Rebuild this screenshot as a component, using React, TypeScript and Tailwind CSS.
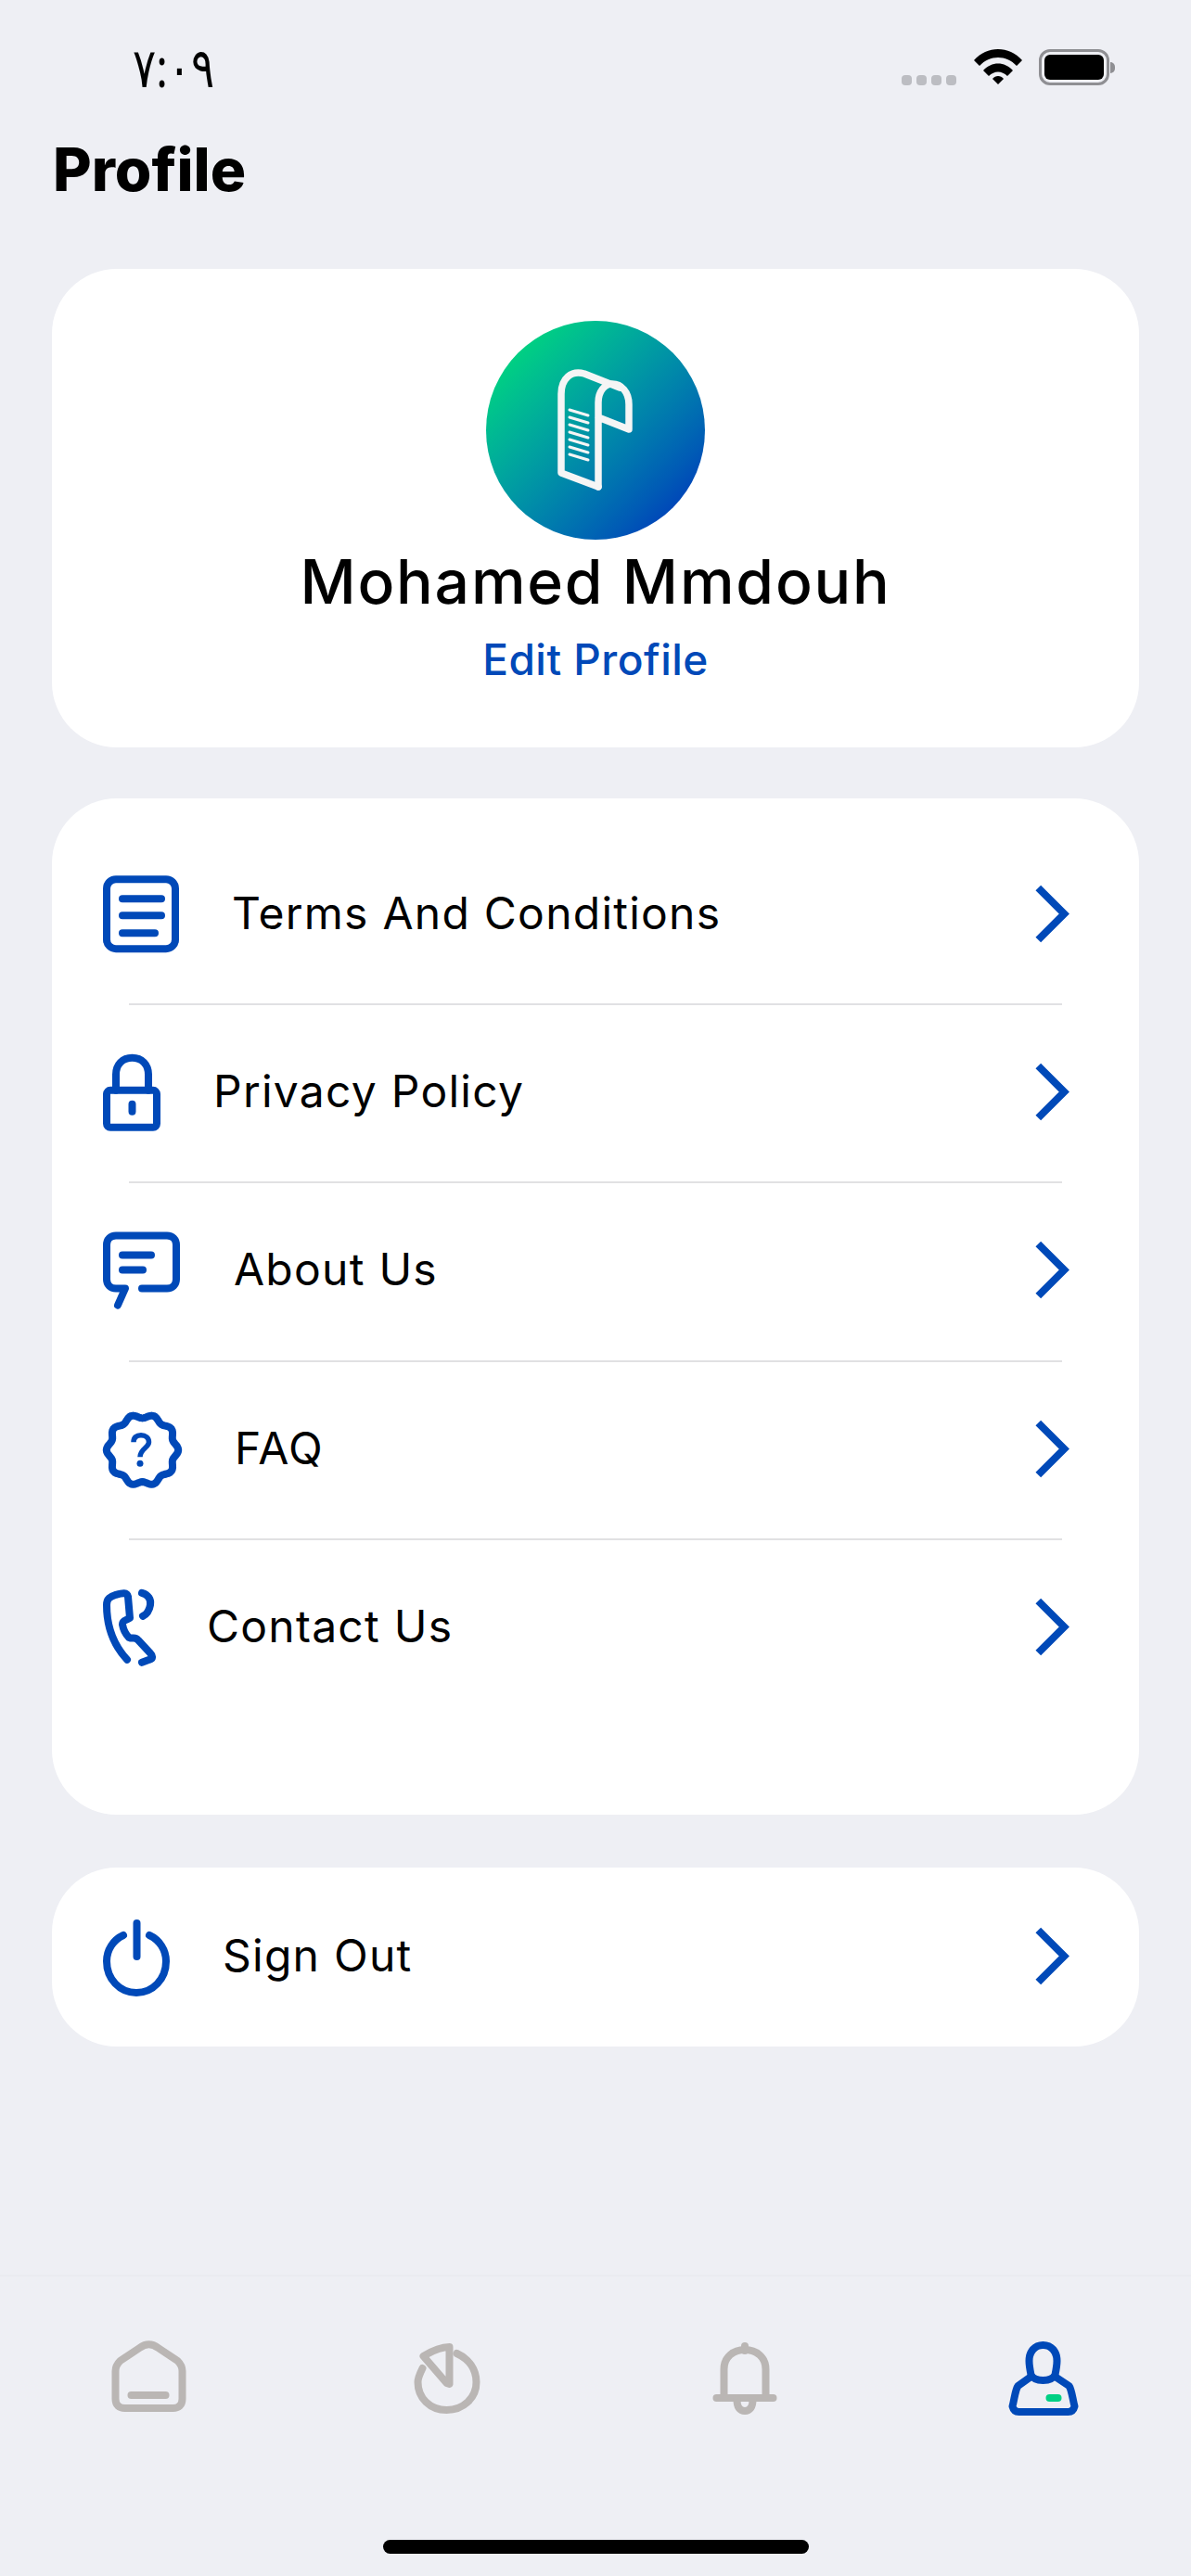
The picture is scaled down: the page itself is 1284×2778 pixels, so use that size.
const BLUE = "#0049b8";
const GREY = "#bab6b4";

const Chevron = () => (
  <svg className="w-[44px] h-[70px] shrink-0" viewBox="0 0 44 70" fill="none">
    <path d="M7.300 5.500L35.300 33.500L7.300 61.500" stroke={BLUE} strokeWidth="8" />
  </svg>
);

// icons are drawn in a 100x100 box, 5px left of the 111px content edge
const DocIcon = () => (
  <svg className="w-[100px] h-[100px] shrink-0" viewBox="106 936.8 100 100" fill="none" stroke={BLUE} strokeWidth="8" strokeLinecap="round">
    <rect x="115" y="948" width="74" height="75" rx="10" />
    <path d="M132 969H174M132 987H174M132 1006H167" />
  </svg>
);

const LockIcon = () => (
  <svg className="w-[100px] h-[100px] shrink-0" viewBox="106 1129.2 100 100" fill="none" stroke={BLUE} strokeWidth="8" strokeLinecap="round" strokeLinejoin="round">
    <rect x="115" y="1176" width="54" height="40" rx="4" />
    <path d="M125 1176V1159C125 1148 132 1141 142.500 1141C153 1141 160 1148 160 1159V1176" />
    <path d="M142.500 1191V1199" />
  </svg>
);

const ChatIcon = () => (
  <svg className="w-[100px] h-[100px] shrink-0" viewBox="106 1321.5 100 100" fill="none" stroke={BLUE} strokeWidth="8" strokeLinecap="round" strokeLinejoin="round">
    <path d="M153 1390H180C186 1390 190 1386 190 1380V1343C190 1337 186 1333 180 1333H125C119 1333 115 1337 115 1343V1380C115 1386 119 1390 125 1390H135L127 1408" />
    <path d="M132 1354H163M132 1370H154" />
  </svg>
);

// scalloped badge: 10 lobes round the centre
const badgePath = Array.from({ length: 120 }, (_, i) => {
  const a = (i / 120) * Math.PI * 2;
  const r = 36.5 + 2.2 * Math.cos(10 * a);
  return `${i === 0 ? "M" : "L"}${(153.5 + r * Math.cos(a)).toFixed(2)} ${(1563.5 + r * Math.sin(a)).toFixed(2)}`;
}).join("") + "Z";

const FaqIcon = () => (
  <svg className="w-[100px] h-[100px] shrink-0" viewBox="106 1513.8 100 100" fill="none" stroke={BLUE} strokeWidth="8" strokeLinejoin="round">
    <path d={badgePath} />
    <path d="M144 1555C144 1550 147 1547.500 152 1547.500C157 1547.500 160.500 1550.500 160.500 1555C160.500 1561 151 1562 151 1571" strokeWidth="5.500" />
    <circle cx="151" cy="1578" r="3.500" fill={BLUE} stroke="none" />
  </svg>
);

const PhoneIcon = () => (
  <svg className="w-[100px] h-[100px] shrink-0" viewBox="106 1706.2 100 100" fill="none" stroke={BLUE} strokeWidth="8" strokeLinecap="round" strokeLinejoin="round">
    <path d="M137 1790C124 1776 115 1757 115 1731C115 1724 119 1722 125 1720C132 1718 137 1717 138 1722L140 1745C136 1748 132 1747 132 1752C133 1758 136 1763 139 1766C143 1768 146 1765 149 1769L162 1783C165 1786 165 1789 161 1790L153 1793" />
    <path d="M153 1718C160 1720 163 1725 162 1731C161 1737 158 1741 154 1743" />
  </svg>
);

const PowerIcon = () => (
  <svg className="w-[100px] h-[100px] shrink-0" viewBox="106 2061 100 100" fill="none" stroke={BLUE} strokeWidth="8" strokeLinecap="round">
    <path d="M133 2087C122 2092 115 2103 115 2115C115 2134 129 2149 147 2149C165 2149 179 2134 179 2115C179 2103 172 2092 161 2087" />
    <path d="M147.500 2074V2110" />
  </svg>
);

const rows = [
  { label: "Terms And Conditions", icon: <DocIcon />, labelClass: "ml-[44px]" },
  { label: "Privacy Policy", icon: <LockIcon />, labelClass: "ml-[24px]" },
  { label: "About Us", icon: <ChatIcon />, labelClass: "ml-[46px]" },
  { label: "FAQ", icon: <FaqIcon />, labelClass: "ml-[47px]" },
  { label: "Contact Us", icon: <PhoneIcon />, labelClass: "ml-[17px]" },
];

const HomeTab = () => (
  <svg className="w-[100px] h-[100px]" viewBox="110.500 2515 100 100" fill="none" stroke={GREY} strokeWidth="8" strokeLinecap="round" strokeLinejoin="round">
    <path d="M124 2557C124 2552 126 2549 129 2546L150 2532C157 2527 163 2527 170 2532L191 2546C194 2549 196 2552 196 2557V2587C196 2594 192 2597 186 2597H134C128 2597 124 2594 124 2587Z" />
    <path d="M141 2583H178" />
  </svg>
);

const PieTab = () => (
  <svg className="w-[100px] h-[100px]" viewBox="431.500 2515 100 100" fill="none" stroke={GREY} strokeWidth="8" strokeLinecap="round" strokeLinejoin="round">
    <path d="M455 2554C452 2560 450 2565 450 2569C450 2586 463 2599 481 2599C499 2599 513 2586 513 2569C513 2555 505 2544 492 2538" />
    <path d="M484 2531C474 2531 464 2536 456 2541L481 2570L484 2571Z" />
  </svg>
);

const BellTab = () => (
  <svg className="w-[100px] h-[100px]" viewBox="752.500 2515 100 100" fill="none" stroke={GREY} strokeWidth="8" strokeLinecap="round" strokeLinejoin="round">
    <path d="M772 2586H833" />
    <path d="M780 2586V2555C780 2542 790 2534 802.500 2534C815 2534 825 2542 825 2555V2586" />
    <path d="M802.500 2530V2535" />
    <path d="M794 2588C794 2596 797 2600 802.500 2600C808 2600 811 2596 811 2588" />
  </svg>
);

const UserTab = () => (
  <svg className="w-[100px] h-[100px]" viewBox="1073.500 2515 100 100" fill="none" strokeLinecap="round" strokeLinejoin="round">
    <path d="M1124 2529C1133 2529 1139 2536 1139 2546C1139 2551 1138 2556 1137 2561C1135 2565 1130 2567 1124 2567C1118 2567 1113 2565 1111 2561C1110 2556 1109 2551 1109 2546C1109 2536 1115 2529 1124 2529Z" stroke={BLUE} strokeWidth="8" />
    <path d="M1111 2563L1097 2573C1094 2577 1093 2588 1091 2595C1092 2599 1094 2601 1098 2601H1151C1155 2601 1157 2599 1158 2595C1156 2588 1155 2577 1152 2573L1137 2563" stroke={BLUE} strokeWidth="8" />
    <path d="M1131 2586H1140" stroke="#00d084" strokeWidth="8" />
  </svg>
);

const LogoMark = () => (
  <svg className="w-[236px] h-[236px]" viewBox="524 346 236 236" fill="none" stroke="#f5f5f5" strokeWidth="7.500" strokeLinecap="round" strokeLinejoin="round">
    <path d="M645 525V434C645 422 652 414 660 414C670 414 678 423 678 436V463L645 450" />
    <path d="M645 525L605 510V425C605 408 616 399 630 403L668 418" />
    <path d="M614 442L634 448M614 450L634 456M614 458L634 464M614 466L634 472M614 474L634 480M614 482L634 488M614 490L634 496" strokeWidth="3" />
  </svg>
);

const StatusIcons = () => (
  <div className="flex items-end">
    <div className="flex gap-[5px]">
      <div className="w-[11px] h-[11px] rounded-[4px] bg-[#bcbdc2]" />
      <div className="w-[11px] h-[11px] rounded-[4px] bg-[#bcbdc2]" />
      <div className="w-[11px] h-[11px] rounded-[4px] bg-[#bcbdc2]" />
      <div className="w-[11px] h-[11px] rounded-[4px] bg-[#bcbdc2]" />
    </div>
    <svg className="ml-[19px] mb-[1px] w-[52px] h-[38px]" viewBox="0 0 52 38">
      <path d="M0 12C14 -4 38 -4 52 12L46 18C35 6 17 6 6 18Z" fill="#000" />
      <path d="M10 23C19 13 33 13 42 23L36 29C30 23 22 23 16 29Z" fill="#000" />
      <path d="M20 32C23 28 29 28 32 32L26 38Z" fill="#000" />
    </svg>
    <div className="ml-[18px] flex items-center">
      <div className="w-[76px] h-[39px] rounded-[12px] border-[3px] border-[#8f8f93] p-[3px]">
        <div className="w-full h-full rounded-[6px] bg-black" />
      </div>
      <div className="ml-[1px] w-[5px] h-[12px] rounded-r-full bg-[#8f8f93]" />
    </div>
  </div>
);

export default function App() {
  return (
    <div className="w-[1284px] h-[2778px] bg-[#eeeff4] flex flex-col font-['Inter',sans-serif] text-black overflow-hidden">
      {/* status bar */}
      <div className="h-[92px] pt-[53px] pl-[143px] pr-[82px] flex items-end justify-between">
        <span className="inline-block text-[47px] leading-[39px] scale-y-[1.25] origin-center font-['Noto_Sans','DejaVu_Sans',sans-serif]">٧:٠٩</span>
        <StatusIcons />
      </div>

      <h1 className="mt-[55px] ml-[57px] text-[64px] leading-[72px] font-extrabold">Profile</h1>

      {/* user card */}
      <div className="mt-[71px] mx-[56px] h-[516px] rounded-[70px] bg-white flex flex-col items-center pt-[56px]">
        <div className="w-[236px] h-[236px] rounded-full bg-linear-to-br from-[#00cf83] from-[15%] to-[#0049b8] to-[85%]">
          <LogoMark />
        </div>
        <div className="mt-[8px] text-[66px] leading-[74px] tracking-[1.800px] font-medium">Mohamed Mmdouh</div>
        <div className="mt-[19px] text-[46px] leading-[56px] tracking-[0.500px] font-medium text-[#0049b8]">Edit Profile</div>
      </div>

      {/* menu card */}
      <div className="mt-[55px] mx-[56px] h-[1096px] rounded-[70px] bg-white pt-[30.670px] flex flex-col">
        {rows.map((row, i) => (
          <div key={row.label}>
            <div className="h-[190.330px] pl-[50px] pr-[72px] flex items-center">
              {row.icon}
              <span className={`-mt-[4px] text-[48px] leading-[56px] tracking-[1.250px] ${row.labelClass}`}>{row.label}</span>
              <div className="ml-auto">
                <Chevron />
              </div>
            </div>
            {i < rows.length - 1 && <div className="mx-[83px] h-[2px] bg-[#e1e1e3]" />}
          </div>
        ))}
      </div>

      {/* sign out */}
      <div className="mt-[57px] mx-[56px] h-[193px] rounded-[70px] bg-white pl-[50px] pr-[72px] flex items-center">
        <PowerIcon />
        <span className="-mt-[4px] ml-[34px] text-[48px] leading-[56px] tracking-[1.250px]">Sign Out</span>
        <div className="ml-auto">
          <Chevron />
        </div>
      </div>

      {/* tab bar */}
      <div className="mt-auto h-[325px] border-t-2 border-[#eaebf0] flex flex-col">
        <div className="mt-[60px] grid grid-cols-4 justify-items-center">
          <HomeTab />
          <PieTab />
          <BellTab />
          <UserTab />
        </div>
        <div className="mt-auto mb-[24px] mx-auto w-[459px] h-[15px] rounded-full bg-black" />
      </div>
    </div>
  );
}
